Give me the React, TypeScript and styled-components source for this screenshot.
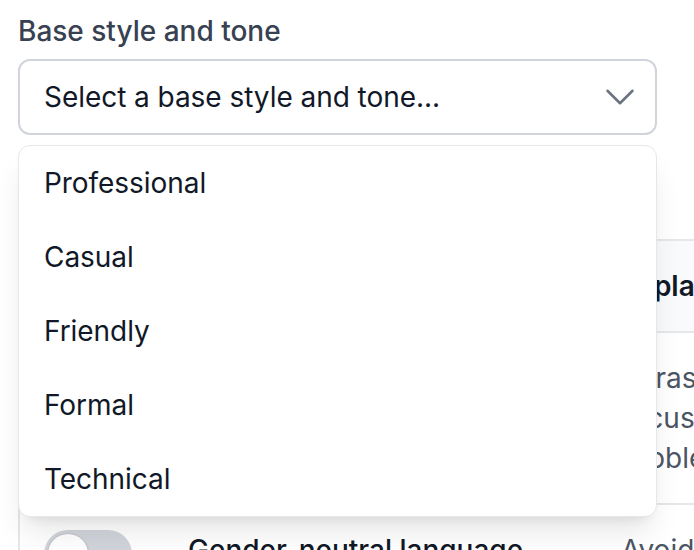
import React from "react";
import styled, { createGlobalStyle } from "styled-components";

const GlobalStyle = createGlobalStyle`
  * { box-sizing: border-box; }
  html, body {
    margin: 0;
    background: #ffffff;
    overflow: hidden;
    font-family: Inter, "Noto Sans", "Liberation Sans", sans-serif;
    -webkit-font-smoothing: antialiased;
  }
`;

const Page = styled.div`
  padding: 11px 0 0 18px;
  width: 1600px;
`;

const Field = styled.div`
  width: 639px;
`;

const Label = styled.label`
  display: block;
  font-size: 28px;
  line-height: 40px;
  font-weight: 500;
  color: #374151;
  margin-bottom: 8px;
`;

const SelectWrap = styled.div`
  position: relative;
`;

const Trigger = styled.button`
  width: 100%;
  height: 76px;
  display: flex;
  align-items: center;
  justify-content: space-between;
  padding: 0 15px 0 24px;
  border: 2px solid #d1d5db;
  border-radius: 12px;
  background: #ffffff;
  font-family: inherit;
  font-size: 28px;
  line-height: 40px;
  letter-spacing: -0.05px;
  color: #111827;
  text-align: left;
  cursor: pointer;
`;

const Chevron = styled.svg`
  width: 40px;
  height: 40px;
  flex: none;
  color: #6b7280;
`;

const Menu = styled.ul`
  position: absolute;
  top: calc(100% + 10px);
  left: 0;
  right: 0;
  z-index: 10;
  margin: 0;
  padding: 0;
  list-style: none;
  background: #ffffff;
  border: 1px solid #e5e7eb;
  border-radius: 12px;
  box-shadow: 0 20px 30px -6px rgba(0, 0, 0, 0.1),
    0 8px 12px -8px rgba(0, 0, 0, 0.1);
  overflow: hidden;
`;

const Option = styled.li`
  height: 74px;
  display: flex;
  align-items: center;
  padding-left: 25px;
  font-size: 28px;
  line-height: 40px;
  letter-spacing: -0.05px;
  color: #111827;
  cursor: pointer;
`;

const RulesTable = styled.div`
  margin-top: 104px;
  width: 1500px;
  border: 2px solid #e5e7eb;
  border-radius: 12px;
  overflow: hidden;
  background: #ffffff;
  font-size: 28px;
  line-height: 40px;
`;

const Row = styled.div<{ $head?: boolean }>`
  display: grid;
  grid-template-columns: 144px 433px 1fr;
  background: ${(p) => (p.$head ? "#f9fafb" : "#ffffff")};
  border-bottom: 2px solid #e5e7eb;
`;

const HeadCell = styled.div`
  padding: 25px 24px;
  font-weight: 600;
  color: #111827;
`;

const Cell = styled.div`
  padding: 25px 24px;
`;

const RuleName = styled.div`
  font-weight: 500;
  color: #111827;
`;

const RuleText = styled.div`
  color: #4b5563;
  white-space: pre;
`;

const Explain = styled.div`
  color: #4b5563;
  white-space: pre;
`;

const Toggle = styled.span<{ $on?: boolean }>`
  position: relative;
  display: block;
  width: 88px;
  height: 48px;
  border-radius: 24px;
  background: ${(p) => (p.$on ? "#4f46e5" : "#d1d5db")};

  &::after {
    content: "";
    position: absolute;
    top: 4px;
    left: ${(p) => (p.$on ? "44px" : "4px")};
    width: 40px;
    height: 40px;
    border-radius: 50%;
    background: #ffffff;
    box-shadow: 0 1px 3px rgba(0, 0, 0, 0.2), 0 0 0 1px rgba(0, 0, 0, 0.04);
  }
`;

const tones = ["Professional", "Casual", "Friendly", "Formal", "Technical"];

export default function App() {
  return (
    <>
      <GlobalStyle />
      <Page>
        <Field>
          <Label htmlFor="tone">Base style and tone</Label>
          <SelectWrap>
            <Trigger id="tone" type="button" aria-haspopup="listbox" aria-expanded="true">
              <span>Select a base style and tone...</span>
              <Chevron viewBox="0 0 24 24" fill="none" stroke="currentColor" strokeWidth={1.5}>
                <path strokeLinecap="round" strokeLinejoin="round" d="m19.5 8.25-7.5 7.5-7.5-7.5" />
              </Chevron>
            </Trigger>
            <Menu role="listbox">
              {tones.map((t) => (
                <Option key={t} role="option">
                  {t}
                </Option>
              ))}
            </Menu>
          </SelectWrap>
        </Field>

        <RulesTable>
          <Row $head>
            <HeadCell>On</HeadCell>
            <HeadCell>Rule</HeadCell>
            <HeadCell>Explanation</HeadCell>
          </Row>
          <Row>
            <Cell>
              <Toggle $on />
            </Cell>
            <Cell>
              <RuleName>Positive language</RuleName>
              <RuleText>{"Frame feedback in terms\nof what can be done."}</RuleText>
            </Cell>
            <Cell>
              <Explain>
                {"Phrases feedback in a positive light,\nfocusing on what can be done, not on\nproblems or mistakes."}
              </Explain>
            </Cell>
          </Row>
          <Row>
            <Cell>
              <Toggle />
            </Cell>
            <Cell>
              <RuleName>Gender-neutral language</RuleName>
            </Cell>
            <Cell>
              <Explain>Avoids gendered terms and pronouns where possible.</Explain>
            </Cell>
          </Row>
        </RulesTable>
      </Page>
    </>
  );
}
